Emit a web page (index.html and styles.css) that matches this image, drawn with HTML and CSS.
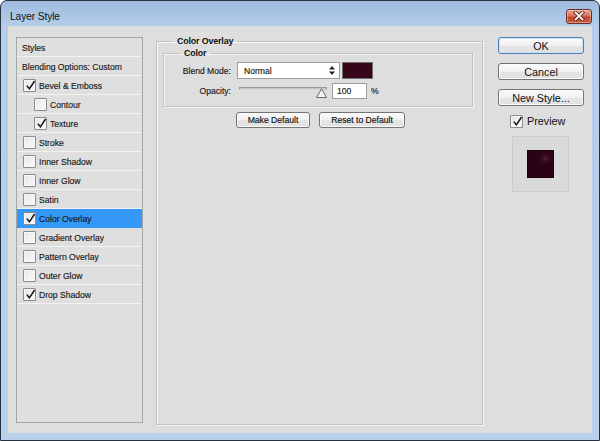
FILE: index.html
```html
<!DOCTYPE html>
<html>
<head>
<meta charset="utf-8">
<title>Layer Style</title>
<link rel="stylesheet" href="styles.css">
</head>
<body>
<div class="window">
  <div class="titlebar">
    <span class="title">Layer Style</span>
    <button class="close" aria-label="Close">
      <svg width="12" height="10" viewBox="0 0 12 10"><path d="M2.5 1.5 L9.5 8.5 M9.5 1.5 L2.5 8.5" stroke="#5a1a12" stroke-width="3.4" stroke-linecap="square"/><path d="M2.5 1.5 L9.5 8.5 M9.5 1.5 L2.5 8.5" stroke="#ffffff" stroke-width="1.8" stroke-linecap="square"/></svg>
    </button>
  </div>
  <div class="client">
    <div class="styles-list">
      <div class="row head">Styles</div>
      <div class="row head">Blending Options: Custom</div>
      <div class="row"><span class="cb"><svg viewBox="0 0 13 13"><path d="M2.8 6.6 L5.4 9.8 L10.6 2" fill="none" stroke="#111" stroke-width="1.5"/></svg></span>Bevel &amp; Emboss</div>
      <div class="row sub"><span class="cb"></span>Contour</div>
      <div class="row sub"><span class="cb"><svg viewBox="0 0 13 13"><path d="M2.8 6.6 L5.4 9.8 L10.6 2" fill="none" stroke="#111" stroke-width="1.5"/></svg></span>Texture</div>
      <div class="row"><span class="cb"></span>Stroke</div>
      <div class="row"><span class="cb"></span>Inner Shadow</div>
      <div class="row"><span class="cb"></span>Inner Glow</div>
      <div class="row"><span class="cb"></span>Satin</div>
      <div class="row sel"><span class="cb"><svg viewBox="0 0 13 13"><path d="M2.8 6.6 L5.4 9.8 L10.6 2" fill="none" stroke="#111" stroke-width="1.5"/></svg></span>Color Overlay</div>
      <div class="row"><span class="cb"></span>Gradient Overlay</div>
      <div class="row"><span class="cb"></span>Pattern Overlay</div>
      <div class="row"><span class="cb"></span>Outer Glow</div>
      <div class="row"><span class="cb"><svg viewBox="0 0 13 13"><path d="M2.8 6.6 L5.4 9.8 L10.6 2" fill="none" stroke="#111" stroke-width="1.5"/></svg></span>Drop Shadow</div>
    </div>

    <fieldset class="group outer">
      <legend class="legend-outer">Color Overlay</legend>
      <fieldset class="group inner">
        <legend class="legend-inner">Color</legend>
        <div class="field">
          <span class="label">Blend Mode:</span>
          <div class="select">
            <span>Normal</span>
            <svg class="updown" width="6" height="9" viewBox="0 0 6 9"><path d="M3 0 L6 3.5 L0 3.5 Z M0 5.5 L6 5.5 L3 9 Z" fill="#222"/></svg>
          </div>
          <div class="swatch"></div>
        </div>
        <div class="field field-2">
          <span class="label">Opacity:</span>
          <div class="slider">
            <div class="track"></div>
            <svg class="thumb" width="11" height="10" viewBox="0 0 11 10"><path d="M0.5 9.5 L5.5 0.8 L10.5 9.5 Z" fill="#f2f2f2" stroke="#6b6b6b" stroke-width="1"/></svg>
          </div>
          <div class="num">100</div>
          <span class="pct">%</span>
        </div>
      </fieldset>
      <div class="btnrow">
        <button class="btn small make">Make Default</button>
        <button class="btn small reset">Reset to Default</button>
      </div>
    </fieldset>

    <div class="actions">
      <button class="btn big default">OK</button>
      <button class="btn big">Cancel</button>
      <button class="btn big">New Style...</button>
      <div class="preview"><span class="cb"><svg viewBox="0 0 13 13"><path d="M2.8 6.6 L5.4 9.8 L10.6 2" fill="none" stroke="#111" stroke-width="1.5"/></svg></span><span>Preview</span></div>
      <div class="thumbbox"><div class="thumbsq"></div></div>
    </div>
  </div>
</div>
</body>
</html>
```

FILE: styles.css
```css
* { box-sizing: border-box; }
html, body { margin: 0; padding: 0; }
body {
  width: 600px;
  height: 441px;
  overflow: hidden;
  background: #ffffff;
  font-family: "Liberation Sans", Arial, sans-serif;
  color: #1a1a1a;
}

.window {
  width: 600px;
  height: 441px;
  border: 1px solid #26323f;
  border-radius: 7px 7px 0 0;
  background: linear-gradient(#9fbcde, #b3cdea 25px, #b8d2ed);
  display: flex;
  flex-direction: column;
}

.titlebar {
  flex: none;
  height: 25px;
  padding: 5px 7px 0 9px;
  display: flex;
  align-items: center;
  justify-content: space-between;
}
.title {
  font-size: 10.2px;
  color: #111;
  letter-spacing: -0.1px;
}
.close {
  width: 26px;
  height: 15px;
  padding: 0;
  margin: 0;
  border: 1px solid #6a2b22;
  border-radius: 3px;
  background: linear-gradient(#e9a796, #d8725e 45%, #c4432c 55%, #cf5b43);
  box-shadow: inset 0 0 0 1px rgba(255,255,255,0.35);
  display: flex;
  align-items: center;
  justify-content: center;
}
.close svg { display: block; }

.client {
  flex: 1;
  margin: 0 7px 7px 7px;
  background: #dedede;
  display: flex;
  align-items: flex-start;
  padding: 11px 8px 0 8px;
  font-size: 8.6px;
  -webkit-text-stroke: 0.15px currentColor;
}

/* left list */
.styles-list {
  flex: none;
  width: 127px;
  height: 386px;
  border: 1px solid #a6a6a6;
  background: #dfdfdf;
}
.row {
  height: 19px;
  border-bottom: 1px solid #f2f2f2;
  display: flex;
  align-items: center;
  padding-left: 6px;
  padding-top: 1px;
  gap: 3px;
  white-space: nowrap;
}
.row.head { padding-left: 5px; }
.row.sub { padding-left: 17px; }
.row.sel { background: #3398f8; border-bottom-color: #3398f8; }

.cb {
  flex: none;
  width: 13px;
  height: 13px;
  border: 1px solid #8c8c8c;
  border-radius: 1px;
  background: linear-gradient(135deg, #e6e6e6, #fbfbfb);
  box-shadow: inset 0 0 0 1px #f7f7f7;
  position: relative;
  -webkit-text-stroke: 0;
}
.cb svg {
  position: absolute;
  left: 0;
  top: -1px;
  width: 13px;
  height: 13px;
  overflow: visible;
}

/* group boxes */
.group {
  margin: 0;
  border: 1px solid #c2c2c2;
  box-shadow: inset 1px 1px 0 #f6f6f6, 1px 1px 0 #f6f6f6;
  min-width: 0;
}
.outer {
  margin: -2px 0 0 13px;
  width: 327px;
  height: 390px;
  padding: 0 9px 0 6px;
}
.inner {
  padding: 3px 0 7px 0;
}
legend {
  font-weight: bold;
  font-size: 8.9px;
  line-height: 12px;
  letter-spacing: -0.15px;
  color: #111;
  padding: 0 4px;
  -webkit-text-stroke: 0;
}
.legend-outer { margin-left: 10px; }
.legend-inner { margin-left: 16px; }

.field {
  display: flex;
  align-items: center;
  height: 17px;
}
.field-2 {
  margin-top: 4px;
  height: 16px;
}
.label {
  flex: none;
  width: 67px;
  text-align: right;
  white-space: nowrap;
}
.select {
  flex: none;
  margin-left: 6px;
  width: 103px;
  height: 17px;
  border: 1px solid #9e9e9e;
  background: #ffffff;
  display: flex;
  align-items: center;
  justify-content: space-between;
  padding: 0 4px 0 6px;
}
.updown { display: block; }
.swatch {
  flex: none;
  margin-left: 2px;
  width: 31px;
  height: 17px;
  border: 1px solid #6f6f6f;
  background: #36051a;
}
.slider {
  flex: none;
  position: relative;
  margin-left: 8px;
  width: 88px;
  height: 16px;
}
.track {
  margin-top: 4px;
  height: 3px;
  border: 1px solid #9a9a9a;
  border-bottom-color: #d8d8d8;
  background: #c6c6c6;
}
.thumb {
  position: absolute;
  right: 0;
  top: 5px;
  display: block;
}
.num {
  flex: none;
  margin-left: 5px;
  width: 35px;
  height: 16px;
  border: 1px solid #9e9e9e;
  background: #ffffff;
  padding-left: 4px;
  line-height: 14px;
}
.pct {
  margin-left: 4px;
}

.btnrow {
  display: flex;
  gap: 9px;
  margin-top: 5px;
  padding-left: 73px;
}

.btn {
  font-family: "Liberation Sans", Arial, sans-serif;
  color: #111;
  margin: 0;
  padding: 0;
  border: 1px solid #747474;
  border-radius: 3px;
  background: linear-gradient(#fbfbfb, #f1f1f1 50%, #e6e6e6 51%, #e0e0e0);
  box-shadow: inset 0 0 0 1px #fcfcfc;
  white-space: nowrap;
}
.btn.small {
  height: 16px;
  font-size: 8.6px;
  -webkit-text-stroke: 0.15px #111;
}
.make { width: 74px; }
.reset { width: 86px; }

.actions {
  flex: none;
  margin-left: 15px;
  width: 86px;
  display: flex;
  flex-direction: column;
  -webkit-text-stroke: 0;
}
.btn.big {
  height: 17px;
  width: 86px;
  font-size: 10.8px;
  margin-bottom: 9px;
}
.btn.default {
  border-color: #4f7fb5;
  box-shadow: inset 0 0 0 1px #c7e3f7;
}
.preview {
  display: flex;
  align-items: center;
  gap: 4px;
  padding-left: 12px;
  margin-top: -1px;
  height: 14px;
  font-size: 10.8px;
  color: #111;
}
.thumbbox {
  margin: 8px 0 0 14px;
  width: 57px;
  height: 56px;
  border: 1px solid #cbcbcb;
  background: #dadada;
  display: flex;
  align-items: center;
  justify-content: center;
}
.thumbsq {
  width: 27px;
  height: 28px;
  background:
    radial-gradient(circle at 70% 28%, rgba(120,40,80,0.55) 0, rgba(80,20,50,0.25) 4px, rgba(0,0,0,0) 7px),
    #2a0414;
  border: 1px solid #1a0209;
}
```
